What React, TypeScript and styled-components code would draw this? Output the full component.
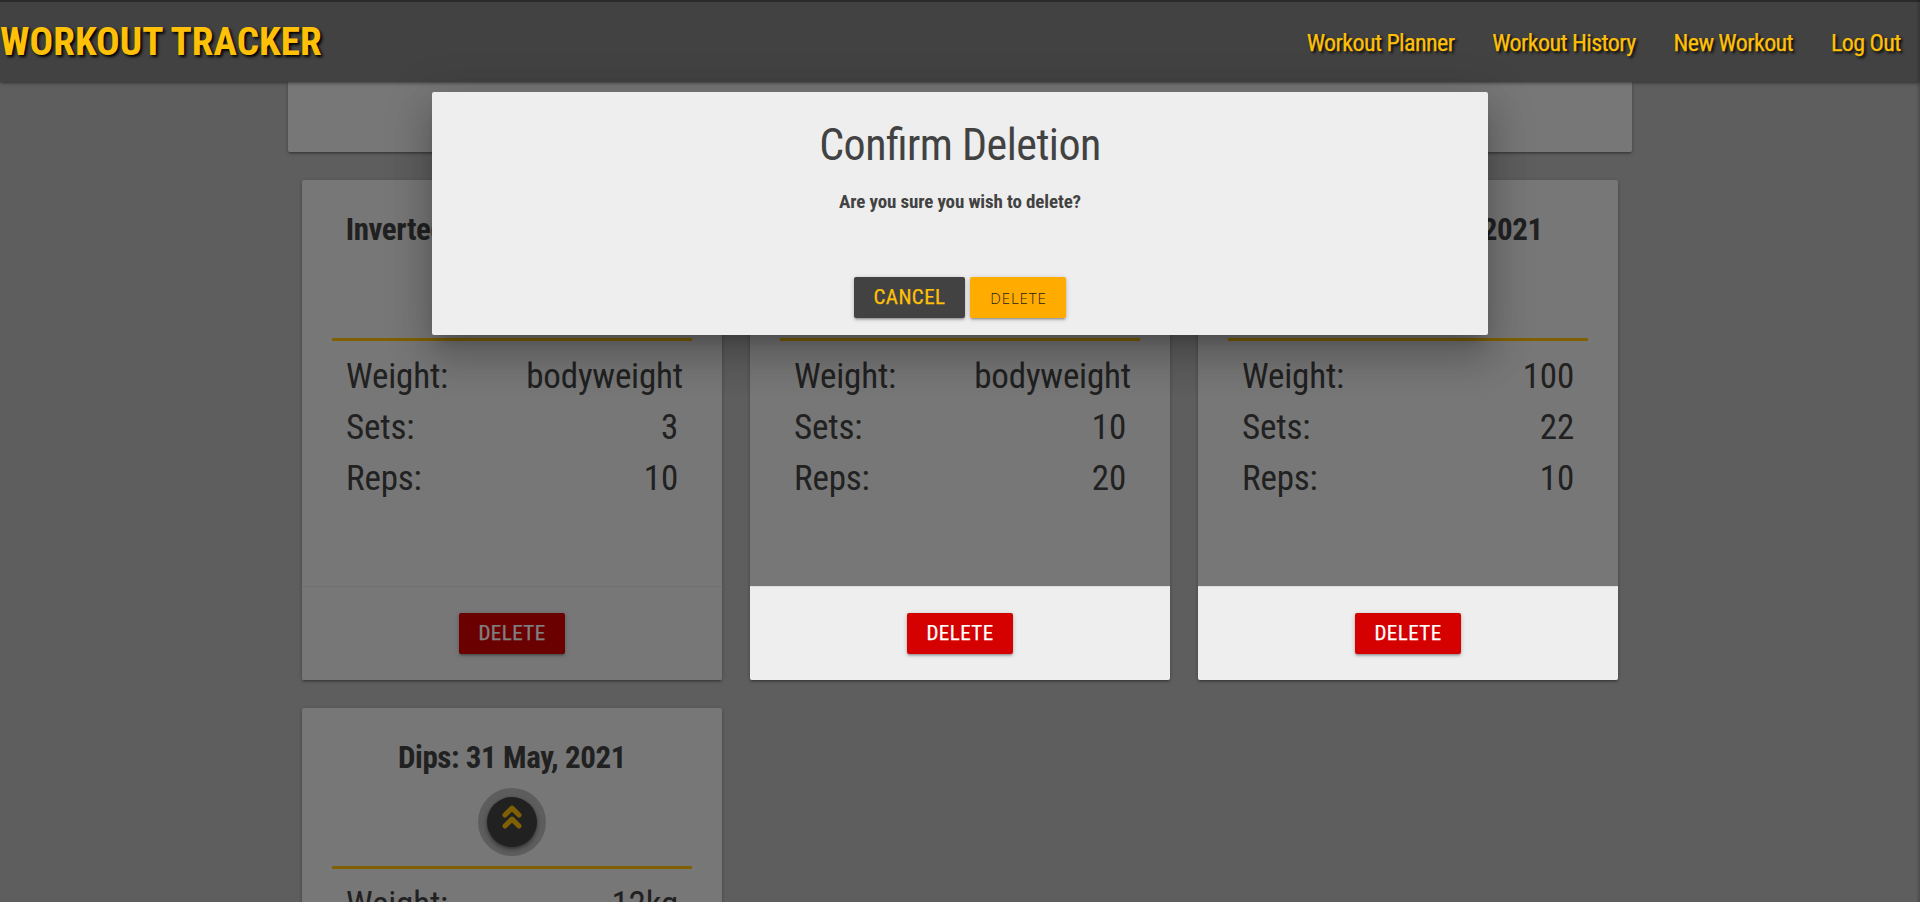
import React from "react";
import styled, { createGlobalStyle } from "styled-components";

const Global = createGlobalStyle`
  *, *::before, *::after { box-sizing: border-box; }
  html, body { margin: 0; height: 100%; overflow: hidden; }
  body {
    background: #bdbdbd;
    color: #424242;
    font-family: "Roboto Condensed", Roboto, sans-serif;
    font-stretch: 75%;
    line-height: 1.5;
  }
`;

const Page = styled.div`
  position: relative;
  height: 902px;
  overflow: hidden;
  display: flex;
  flex-direction: column;

  &::after {
    content: "";
    position: absolute;
    z-index: 40;
    inset: 0 0 0 auto;
    width: 4px;
    background: linear-gradient(to right, transparent, rgba(0, 0, 0, 0.2));
  }
`;

const shadow = `0 2px 2px 0 rgba(0, 0, 0, 0.14), 0 3px 1px -2px rgba(0, 0, 0, 0.12),
    0 1px 5px 0 rgba(0, 0, 0, 0.2)`;

const Header = styled.header`
  position: relative;
  z-index: 20;
  flex: none;
  height: 82px;
  border-top: 2px solid #2a2a2a;
  background: #424242;
  display: flex;
  align-items: center;
  justify-content: space-between;
  box-shadow: ${shadow};
`;

const Brand = styled.h1`
  margin: 0;
  font-size: 39.2px;
  font-weight: 700;
  letter-spacing: 0.08px;
  color: #ffc107;
  text-shadow: 2px 2px 3px #000;
  white-space: nowrap;
`;

const Nav = styled.nav`
  display: flex;
`;

const NavLink = styled.a`
  padding: 1px 19.2px 0 18.6px;
  font-size: 24px;
  font-weight: 400;
  letter-spacing: -0.58px;
  -webkit-text-stroke: 0.25px currentColor;
  color: #ffc107;
  text-shadow: 2px 2px 3px #000;
  white-space: nowrap;
`;

const Content = styled.main`
  width: 1344px;
  margin: 0 auto;
  flex: none;
`;

const Panel = styled.section`
  height: 70px;
  border-radius: 0 0 2px 2px;
  background: #eee;
  box-shadow: ${shadow};
`;

const Grid = styled.section`
  display: grid;
  grid-template-columns: repeat(3, 420px);
  gap: 28px;
  padding: 28px 14px;
`;

const Card = styled.article`
  height: 500px;
  border-radius: 2px;
  background: #eee;
  box-shadow: ${shadow};
  display: flex;
  flex-direction: column;
`;

const CardBody = styled.div`
  flex: 1;
  padding: 24px 30px 0;
`;

const CardTop = styled.div`
  height: 137px;
  border-bottom: 3px solid #ffc107;
  display: flex;
  flex-direction: column;
  align-items: center;
`;

const CardTitle = styled.h2`
  margin: 0;
  height: 50px;
  line-height: 52px;
  font-size: 31px;
  font-weight: 700;
  letter-spacing: -0.4px;
  white-space: nowrap;
`;

const Stats = styled.dl`
  margin: 0;
  padding: 10px 14px 0;
`;

const Stat = styled.div`
  display: flex;
  justify-content: space-between;
  height: 51px;
  line-height: 51px;
  font-size: 35px;
  letter-spacing: -0.17px;
`;

const Label = styled.dt``;

const Value = styled.dd<{ $overhang: number }>`
  margin: 0 ${(p) => -p.$overhang}px 0 0;
`;

const CardFooter = styled.footer<{ $raised: boolean }>`
  position: relative;
  z-index: ${(p) => (p.$raised ? 15 : "auto")};
  height: 94px;
  border-top: 1px solid rgba(160, 160, 160, 0.2);
  border-radius: 0 0 2px 2px;
  background: #eee;
  display: flex;
  justify-content: center;
  padding-top: 26px;
`;

const Button = styled.button<{ $tone: "danger" | "dark" | "amber" }>`
  height: 41px;
  width: ${(p) => ({ danger: 106, dark: 111, amber: 96 })[p.$tone]}px;
  padding: 0 0 0 ${(p) => (p.$tone === "amber" ? 1 : 0)}px;
  border: 0;
  border-radius: 2px;
  font-family: ${(p) => (p.$tone === "amber" ? '"Open Sans", sans-serif' : "inherit")};
  font-stretch: ${(p) => (p.$tone === "amber" ? "100%" : "75%")};
  font-weight: ${(p) => (p.$tone === "amber" ? 300 : 400)};
  font-size: ${(p) => (p.$tone === "amber" ? 15 : 21)}px;
  line-height: ${(p) => (p.$tone === "amber" ? 43 : 39)}px;
  letter-spacing: ${(p) => (p.$tone === "amber" ? 0.9 : 0.45)}px;
  -webkit-text-stroke: ${(p) => (p.$tone === "amber" ? 0 : 0.25)}px currentColor;
  background: ${(p) => ({ danger: "#d50000", dark: "#424242", amber: "#ffab00" })[p.$tone]};
  color: ${(p) => ({ danger: "#fff", dark: "#ffc107", amber: "#1c1c1c" })[p.$tone]};
  box-shadow: ${shadow};
`;

const PulseButton = styled.span`
  width: 50px;
  height: 50px;
  margin-top: 15px;
  border-radius: 50%;
  background: #424242;
  color: #ffc107;
  display: flex;
  justify-content: center;
  box-shadow: 0 2px 4px rgba(0, 0, 0, 0.5), 0 0 0 9px rgba(66, 66, 66, 0.3);
`;

const Chevrons = styled.svg`
  width: 20px;
  height: 24px;
  margin-top: 8px;
`;

const Overlay = styled.div`
  position: absolute;
  inset: 0;
  z-index: 10;
  background: rgba(0, 0, 0, 0.5);
`;

const Modal = styled.div`
  position: absolute;
  z-index: 30;
  top: 92px;
  left: 432px;
  width: 1056px;
  height: 243px;
  border-radius: 2px;
  background: #eee;
  text-align: center;
  box-shadow: 0 24px 38px 3px rgba(0, 0, 0, 0.14), 0 9px 46px 8px rgba(0, 0, 0, 0.12),
    0 11px 15px -7px rgba(0, 0, 0, 0.2);
`;

const ModalTitle = styled.h4`
  margin: 0;
  padding-top: 29px;
  line-height: 48px;
  font-size: 44px;
  font-weight: 400;
  letter-spacing: -0.53px;
  font-feature-settings: "liga" 1;
`;

const ModalText = styled.p`
  margin: 19px 0 0;
  line-height: 28px;
  font-size: 19px;
  font-weight: 700;
  letter-spacing: -0.12px;
`;

const ModalActions = styled.div`
  display: flex;
  justify-content: center;
  gap: 5px;
  margin-top: 61px;
`;

type Workout = {
  title: string;
  weight: string;
  weightOverhang?: number;
  sets: string;
  reps: string;
  raised?: boolean;
};

const workouts: Workout[] = [
  { title: "Inverted Row: 31 May, 2021", weight: "bodyweight", weightOverhang: 5, sets: "3", reps: "10" },
  { title: "Push Ups: 31 May, 2021", weight: "bodyweight", weightOverhang: 5, sets: "10", reps: "20", raised: true },
  { title: "Deadlift: 31 May, 2021", weight: "100", sets: "22", reps: "10", raised: true },
  { title: "Dips: 31 May, 2021", weight: "12kg", sets: "3", reps: "10" },
];

const links = ["Workout Planner", "Workout History", "New Workout", "Log Out"];

function StatRow({ label, value, overhang = 0 }: { label: string; value: string; overhang?: number }) {
  return (
    <Stat>
      <Label>{label}</Label>
      <Value $overhang={overhang}>{value}</Value>
    </Stat>
  );
}

function WorkoutCard({ workout }: { workout: Workout }) {
  return (
    <Card>
      <CardBody>
        <CardTop>
          <CardTitle>{workout.title}</CardTitle>
          <PulseButton>
            <Chevrons viewBox="0 0 20 24" fill="none" stroke="currentColor" strokeWidth="5" strokeLinecap="round" strokeLinejoin="round">
              <path d="M3 10 L10 3.1 L17 10" />
              <path d="M3 21 L10 14.1 L17 21" />
            </Chevrons>
          </PulseButton>
        </CardTop>
        <Stats>
          <StatRow label="Weight:" value={workout.weight} overhang={workout.weightOverhang} />
          <StatRow label="Sets:" value={workout.sets} />
          <StatRow label="Reps:" value={workout.reps} />
        </Stats>
      </CardBody>
      <CardFooter $raised={!!workout.raised}>
        <Button $tone="danger">DELETE</Button>
      </CardFooter>
    </Card>
  );
}

export default function App() {
  return (
    <Page>
      <Global />
      <Header>
        <Brand>WORKOUT TRACKER</Brand>
        <Nav>
          {links.map((l) => (
            <NavLink key={l}>{l}</NavLink>
          ))}
        </Nav>
      </Header>
      <Content>
        <Panel />
        <Grid>
          {workouts.map((w) => (
            <WorkoutCard key={w.title} workout={w} />
          ))}
        </Grid>
      </Content>
      <Overlay />
      <Modal role="dialog">
        <ModalTitle>Confirm Deletion</ModalTitle>
        <ModalText>Are you sure you wish to delete?</ModalText>
        <ModalActions>
          <Button $tone="dark">CANCEL</Button>
          <Button $tone="amber">DELETE</Button>
        </ModalActions>
      </Modal>
    </Page>
  );
}
